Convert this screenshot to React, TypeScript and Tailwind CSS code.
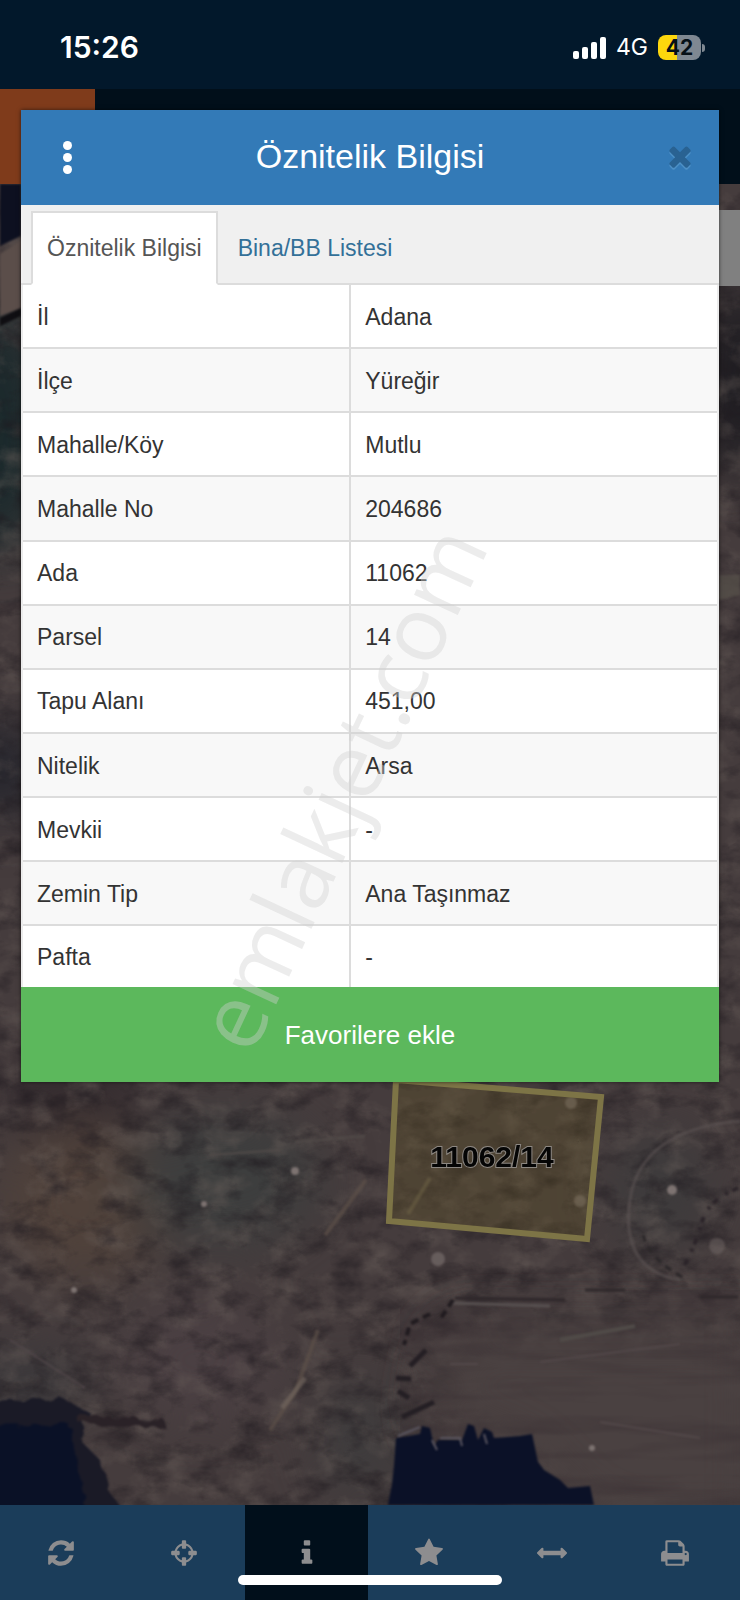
import React, { useState } from 'react';
import clsx from 'clsx';

interface ParcelRow {
  label: string;
  value: string;
}

const parcelRows: ParcelRow[] = [
  { label: 'İl', value: 'Adana' },
  { label: 'İlçe', value: 'Yüreğir' },
  { label: 'Mahalle/Köy', value: 'Mutlu' },
  { label: 'Mahalle No', value: '204686' },
  { label: 'Ada', value: '11062' },
  { label: 'Parsel', value: '14' },
  { label: 'Tapu Alanı', value: '451,00' },
  { label: 'Nitelik', value: 'Arsa' },
  { label: 'Mevkii', value: '-' },
  { label: 'Zemin Tip', value: 'Ana Taşınmaz' },
  { label: 'Pafta', value: '-' },
];

const tabs = ['Öznitelik Bilgisi', 'Bina/BB Listesi'];

// 1792-unit icon outlines
const icons = {
  refresh:
    'M1639 1056q0 5-1 7-64 268-268 434.5t-478 166.5q-146 0-282.5-55t-243.5-157l-129 129q-19 19-45 19t-45-19-19-45v-448q0-26 19-45t45-19h448q26 0 45 19t19 45-19 45l-137 137q71 66 161 102t187 36q134 0 250-65t186-179q11-17 53-117 8-23 30-23h192q13 0 22.5 9.5t9.5 22.5zm25-800v448q0 26-19 45t-45 19h-448q-26 0-45-19t-19-45 19-45l138-138q-148-137-349-137-134 0-250 65t-186 179q-11 17-53 117-8 23-30 23h-199q-13 0-22.5-9.5t-9.5-22.5v-7q65-268 270-434.5t480-166.5q146 0 284 55.5t245 156.5l130-129q19-19 45-19t45 19 19 45z',
  crosshairs:
    'M1325 1024h-109q-26 0-45-19t-19-45v-128q0-26 19-45t45-19h109q-32-108-112.5-188.5t-188.5-112.5v109q0 26-19 45t-45 19h-128q-26 0-45-19t-19-45v-109q-108 32-188.5 112.5t-112.5 188.5h109q26 0 45 19t19 45v128q0 26-19 45t-45 19h-109q32 108 112.5 188.5t188.5 112.5v-109q0-26 19-45t45-19h128q26 0 45 19t19 45v109q108-32 188.5-112.5t112.5-188.5zm339-192v128q0 26-19 45t-45 19h-143q-37 161-154.5 278.5t-278.5 154.5v143q0 26-19 45t-45 19h-128q-26 0-45-19t-19-45v-143q-161-37-278.5-154.5t-154.5-278.5h-143q-26 0-45-19t-19-45v-128q0-26 19-45t45-19h143q37-161 154.5-278.5t278.5-154.5v-143q0-26 19-45t45-19h128q26 0 45 19t19 45v143q161 37 278.5 154.5t154.5 278.5h143q26 0 45 19t19 45z',
  info: 'M1216 1344v128q0 26-19 45t-45 19h-512q-26 0-45-19t-19-45v-128q0-26 19-45t45-19h64v-384h-64q-26 0-45-19t-19-45v-128q0-26 19-45t45-19h384q26 0 45 19t19 45v576h64q26 0 45 19t19 45zm-128-1152v192q0 26-19 45t-45 19h-256q-26 0-45-19t-19-45v-192q0-26 19-45t45-19h256q26 0 45 19t19 45z',
  star: 'M1728 647q0 22-26 48l-363 354 86 500q1 7 1 20 0 21-10.5 35.5t-30.5 14.5q-19 0-40-12l-449-236-449 236q-22 12-40 12-21 0-31.5-14.5t-10.5-35.5q0-6 2-20l86-500-364-354q-25-27-25-48 0-37 56-46l502-73 225-455q19-41 49-41t49 41l225 455 502 73q56 9 56 46z',
  arrows:
    'M1792 896q0 26-19 45l-256 256q-19 19-45 19t-45-19-19-45v-128h-1024v128q0 26-19 45t-45 19-45-19l-256-256q-19-19-19-45t19-45l256-256q19-19 45-19t45 19 19 45v128h1024v-128q0-26 19-45t45-19 45 19l256 256q19 19 19 45z',
  print:
    'M448 1536h896v-256h-896v256zm0-640h896v-384h-160q-40 0-68-28t-28-68v-160h-640v640zm1152 64q0-26-19-45t-45-19-45 19-19 45 19 45 45 19 45-19 19-45zm128 0v416q0 13-9.5 22.5t-22.5 9.5h-224v160q0 40-28 68t-68 28h-960q-40 0-68-28t-28-68v-160h-224q-13 0-22.5-9.5t-9.5-22.5v-416q0-79 56.5-135.5t135.5-56.5h64v-544q0-40 28-68t68-28h672q40 0 88 20t76 48l152 152q28 28 48 76t20 88v256h64q79 0 135.5 56.5t56.5 135.5z',
  times:
    'M1490 1322q0 40-28 68l-136 136q-28 28-68 28t-68-28l-294-294-294 294q-28 28-68 28t-68-28l-136-136q-28-28-28-68t28-68l294-294-294-294q-28-28-28-68t28-68l136-136q28-28 68-28t68 28l294 294 294-294q28-28 68-28t68 28l136 136q28 28 28 68t-28 68l-294 294 294 294q28 28 28 68z',
};

type IconName = keyof typeof icons;

const tools: { name: IconName; label: string }[] = [
  { name: 'refresh', label: 'Yenile' },
  { name: 'crosshairs', label: 'Konum' },
  { name: 'info', label: 'Bilgi' },
  { name: 'star', label: 'Favoriler' },
  { name: 'arrows', label: 'Ölçüm' },
  { name: 'print', label: 'Yazdır' },
];

function Icon({ name, className }: { name: IconName; className?: string }) {
  return (
    <svg viewBox="0 0 1792 1792" fill="currentColor" className={className} aria-hidden="true">
      <path d={icons[name]} />
    </svg>
  );
}

function StatusBar() {
  return (
    <div className="flex h-[89px] shrink-0 items-center justify-between bg-[#02182b] pr-[35px] pl-[60px] font-['Inter',sans-serif] text-white">
      <span className="pt-1.5 text-[30px] font-semibold">15:26</span>
      <div className="flex items-center gap-2.5 pt-1.5">
        <svg viewBox="0 0 33 22" className="h-[22px] w-[33px]" fill="currentColor" aria-hidden="true">
          <rect x="0" y="14" width="6" height="8" rx="2" />
          <rect x="9" y="10" width="6" height="12" rx="2" />
          <rect x="18" y="5" width="6" height="17" rx="2" />
          <rect x="27" y="0" width="6" height="22" rx="2" />
        </svg>
        <span className="text-[23px]">4G</span>
        <div className="flex items-center gap-px">
          <div className="flex h-[25px] w-[43px] items-center justify-center rounded-lg bg-linear-to-r from-[#fdd70d] from-44% to-[#7f8892] to-44% text-[21px] font-bold text-[#061018]">
            42
          </div>
          <div className="h-2 w-[3px] rounded-r-full bg-[#7f8892]" />
        </div>
      </div>
    </div>
  );
}

function SatelliteMap() {
  return (
    <svg
      viewBox="0 184 740 1321"
      preserveAspectRatio="xMidYMid slice"
      colorInterpolationFilters="sRGB"
      className="h-full w-full"
      aria-hidden="true"
    >
      <defs>
        <filter id="soft" x="-50%" y="-50%" width="200%" height="200%">
          <feGaussianBlur stdDeviation="26" />
        </filter>
        <filter id="edge" x="-20%" y="-20%" width="140%" height="140%">
          <feGaussianBlur stdDeviation="1.3" />
        </filter>
        <filter id="ragged" x="-20%" y="-20%" width="140%" height="140%">
          <feTurbulence type="fractalNoise" baseFrequency="0.07" numOctaves="2" seed="4" result="n" />
          <feDisplacementMap in="SourceGraphic" in2="n" scale="14" />
          <feGaussianBlur stdDeviation="1.3" />
        </filter>
        <filter id="dark" x="0" y="0" width="100%" height="100%">
          <feTurbulence type="fractalNoise" baseFrequency="0.03 0.045" numOctaves="5" seed="11" />
          <feColorMatrix values="0 0 0 0 0.12  0 0 0 0 0.1  0 0 0 0 0.12  2.4 0 0 0 -1.1" />
          <feGaussianBlur stdDeviation="0.7" />
        </filter>
        <filter id="light" x="0" y="0" width="100%" height="100%">
          <feTurbulence type="fractalNoise" baseFrequency="0.03 0.04" numOctaves="5" seed="27" />
          <feColorMatrix values="0 0 0 0 0.42  0 0 0 0 0.38  0 0 0 0 0.36  0 2.4 0 0 -1.1" />
          <feGaussianBlur stdDeviation="0.7" />
        </filter>
        <filter id="streak" x="0" y="0" width="100%" height="100%">
          <feTurbulence type="fractalNoise" baseFrequency="0.006 0.05" numOctaves="3" seed="8" />
          <feColorMatrix values="0 0 0 0 0.2  0 0 0 0 0.16  0 0 0 0 0.18  2.6 0 0 0 -1.2" />
        </filter>
      </defs>

      <rect y="184" width="740" height="1321" fill="#453c3d" />
      <g filter="url(#soft)">
        <ellipse cx="85" cy="1200" rx="85" ry="80" fill="#50423b" />
        <ellipse cx="225" cy="1180" rx="95" ry="65" fill="#3d3e3e" />
        <ellipse cx="70" cy="1090" rx="90" ry="30" fill="#30282c" />
        <ellipse cx="660" cy="1190" rx="50" ry="60" fill="#3d3b3c" />
        <ellipse cx="200" cy="1360" rx="80" ry="60" fill="#4b4043" />
        <ellipse cx="20" cy="1385" rx="70" ry="30" fill="#38373a" />
        <ellipse cx="360" cy="1440" rx="40" ry="60" fill="#3e3c3d" />
        <ellipse cx="0" cy="430" rx="40" ry="130" fill="#16272a" />
        <ellipse cx="0" cy="770" rx="40" ry="50" fill="#22232b" />
        <ellipse cx="740" cy="380" rx="40" ry="100" fill="#1c1b20" />
      </g>

      <rect y="184" width="740" height="1321" filter="url(#light)" opacity="0.45" />
      <rect y="184" width="740" height="1321" filter="url(#dark)" opacity="0.6" />
      <path d="M450 1330H760V1530H600L520 1450L430 1420Z" fill="#4a4141" filter="url(#soft)" />
      <path d="M450 1330H760V1530H600L520 1450L430 1420Z" fill="#4a4141" opacity="0.5" filter="url(#soft)" />
      <rect x="400" y="1290" width="340" height="215" filter="url(#streak)" opacity="0.4" />

      {/* wall at the left edge */}
      <g filter="url(#edge)">
        <path d="M0 184H21V236L0 246Z" fill="#0d1020" />
        <path d="M0 254L21 240V308L0 316Z" fill="#5b4e4a" />
        <path d="M0 318L21 308V316L0 326Z" fill="#0f0e12" />
        <path d="M719 575H740V595L719 600Z" fill="#57514a" opacity="0.7" />
      </g>

      {/* tracks and furrows */}
      <g fill="none" filter="url(#edge)">
        <path d="M740 1121Q640 1130 630 1200T680 1280" stroke="#5c5354" strokeWidth="3" opacity="0.6" />
        <path d="M738 1188Q708 1200 702 1222T682 1270" stroke="#2b2429" strokeWidth="4" strokeDasharray="6 5 3 9" />
        <path d="M643 1235Q650 1260 684 1278" stroke="#2b2729" strokeWidth="3" strokeDasharray="7 6" />
        <path d="M455 1298L565 1300M585 1290H625M700 1297H738" stroke="#2f282b" strokeWidth="3" />
        <path d="M450 1303L550 1306" stroke="#575050" strokeWidth="3" />
        <path d="M560 1340L635 1326" stroke="#504b48" strokeWidth="4" />
        <path d="M540 1362L680 1344M450 1364H478M600 1422L700 1438" stroke="#524849" strokeWidth="2" />
        <path d="M453 1300L441 1318M430 1314L410 1324L404 1345" stroke="#201b1f" strokeWidth="4" strokeDasharray="8 5" />
        <path d="M426 1350L410 1366M396 1378L411 1379M398 1391L409 1398M434 1402L402 1417" stroke="#241f24" strokeWidth="5" />
        <path d="M366 1180L325 1235M318 1330L296 1390L270 1430" stroke="#5c5049" strokeWidth="4" opacity="0.7" />
        <path d="M305 1378L282 1408" stroke="#756960" strokeWidth="5" opacity="0.6" />
        <path d="M295 1142L365 1136M210 1155L280 1150" stroke="#504a48" strokeWidth="2" />
        <path d="M10 1340L85 1388" stroke="#52494b" strokeWidth="2" opacity="0.8" />
      </g>
      <g fill="#7d7371" filter="url(#edge)">
        <circle cx="295" cy="1171" r="4" />
        <circle cx="204" cy="1204" r="3" />
        <circle cx="74" cy="1290" r="3" />
        <circle cx="438" cy="1259" r="7" opacity="0.6" />
        <circle cx="672" cy="1190" r="5" />
        <circle cx="717" cy="1246" r="8" opacity="0.4" />
        <circle cx="592" cy="1448" r="3" />
        <circle cx="571" cy="1103" r="6" opacity="0.6" />
        <circle cx="580" cy="1201" r="6" opacity="0.6" />
      </g>

      {/* building shadows */}
      <g filter="url(#ragged)">
        <path d="M-10 1402L60 1398L90 1412L80 1440L100 1460L108 1490L130 1520H-10Z" fill="#1a1a26" />
        <path d="M-10 1426L70 1424L76 1460L90 1520H-10Z" fill="#0a1126" />
        <path d="M80 1414L165 1420V1427L80 1424Z" fill="#2a2227" />
      </g>
      <path
        d="M396 1438L420 1434L422 1426L430 1428L434 1446L438 1440L462 1440L468 1424L474 1426L478 1440L484 1428L492 1432L494 1438L520 1436L532 1434L538 1462L544 1470L560 1480L568 1488L590 1486L594 1505H388L392 1484L394 1466Z"
        fill="#0b1127"
        filter="url(#edge)"
      />
      <path
        d="M398 1436L420 1427M432 1440L437 1450M440 1438H460L462 1446M484 1434L487 1444"
        stroke="#5a5660"
        strokeWidth="2"
        fill="none"
        filter="url(#edge)"
      />

      {/* selected parcel */}
      <path d="M396 1080L601 1097L587 1239L389 1221Z" fill="#6b5a1c" fillOpacity="0.25" stroke="#7d7446" strokeWidth="6" />
      <path d="M430 1178L408 1214" stroke="#6b6044" strokeWidth="4" opacity="0.6" filter="url(#edge)" />
      <text
        x="492"
        y="1167"
        textAnchor="middle"
        className="font-['Liberation_Sans',Arial,sans-serif] text-[30px] font-bold"
        fill="#050505"
        stroke="#8c8782"
        strokeWidth="2"
        paintOrder="stroke"
      >
        11062/14
      </text>
    </svg>
  );
}

function Toolbar() {
  return (
    <nav className="relative grid h-[95px] shrink-0 grid-cols-6 bg-[#1b3d5a] pr-1 text-[#8d8d8f]">
      {tools.map((tool) => (
        <button
          key={tool.name}
          aria-label={tool.label}
          className={clsx('flex items-center justify-center', tool.name === 'info' && 'bg-[#010f1b]')}
        >
          <Icon name={tool.name} className="size-[30px]" />
        </button>
      ))}
      <div className="absolute inset-x-0 bottom-[15px] flex justify-center">
        <div className="h-2.5 w-[264px] rounded-full bg-white" />
      </div>
    </nav>
  );
}

function ParcelDialog() {
  const [activeTab, setActiveTab] = useState(tabs[0]);

  return (
    <section role="dialog" aria-labelledby="dialog-title" className="relative shadow-[0_0_4px_rgba(0,0,0,0.6)]">
      <header className="grid h-[95px] grid-cols-[1fr_auto_1fr] items-center bg-[#337ab7] px-[26px] text-white">
        <button aria-label="Menü" className="flex w-10 flex-col items-center gap-[3px]">
          <span className="size-[9px] rounded-full bg-white" />
          <span className="size-[9px] rounded-full bg-white" />
          <span className="size-[9px] rounded-full bg-white" />
        </button>
        <h1 id="dialog-title" className="pb-1 text-[34px] leading-10">
          Öznitelik Bilgisi
        </h1>
        <button
          aria-label="Kapat"
          className="flex w-[26px] justify-center justify-self-end pb-1 text-[#296292] drop-shadow-[0_2px_0_#4d90c6]"
        >
          <Icon name="times" className="size-8 shrink-0" />
        </button>
      </header>

      <div role="tablist" className="flex h-20 items-end gap-1 border-b-2 border-[#dcdcdc] bg-[#f0f0f0] pl-2.5 text-[23px]">
        {tabs.map((tab) => (
          <button
            key={tab}
            role="tab"
            aria-selected={tab === activeTab}
            onClick={() => setActiveTab(tab)}
            className={clsx(
              '-mb-0.5 h-[74px] border-2 px-3.5',
              tab === activeTab ? 'border-[#dcdcdc] border-b-white bg-white text-[#555]' : 'border-transparent text-[#337098]'
            )}
          >
            {tab}
          </button>
        ))}
      </div>

      <table className="h-[702px] w-full table-fixed border-separate border-spacing-0 border-x-2 border-[#ececec] bg-white text-left text-[23px] leading-8 text-[#333]">
        <tbody>
          {parcelRows.map((row) => (
            <tr key={row.label} className="group even:bg-[#f8f8f8]">
              <th
                scope="row"
                className="w-[47.3%] border-r-2 border-b-2 border-[#dcdcdc] px-3.5 pt-px font-normal group-last:border-b-0"
              >
                {row.label}
              </th>
              <td className="border-b-2 border-[#dcdcdc] px-3.5 pt-px group-last:border-b-0">{row.value}</td>
            </tr>
          ))}
        </tbody>
      </table>

      <button className="block h-[95px] w-full bg-[#5cb85c] pt-0.5 text-[26px] text-white">Favorilere ekle</button>

      {/* watermark */}
      <span className="pointer-events-none absolute top-[677px] left-[318px] -translate-x-1/2 -translate-y-1/2 -rotate-65 font-['Open_Sans',sans-serif] text-[90px] leading-none text-[#d0d0d0]/40">
        emlakjet.com
      </span>
    </section>
  );
}

export default function App() {
  return (
    <div className="relative min-h-screen overflow-hidden font-['Liberation_Sans',Arial,sans-serif]">
      <div className="absolute inset-0 flex flex-col">
        <StatusBar />
        <div className="flex h-[95px] shrink-0 bg-[#010f1a]">
          <div className="w-[95px] bg-[#7f3b1b]" />
        </div>
        <main className="relative min-h-0 flex-1">
          <div className="absolute inset-0">
            <SatelliteMap />
          </div>
          <div className="absolute top-[26px] right-0 h-[76px] w-20 bg-[#808080]" />
        </main>
        <Toolbar />
      </div>

      <div className="px-[21px] pt-[110px] pb-[110px]">
        <ParcelDialog />
      </div>
    </div>
  );
}
